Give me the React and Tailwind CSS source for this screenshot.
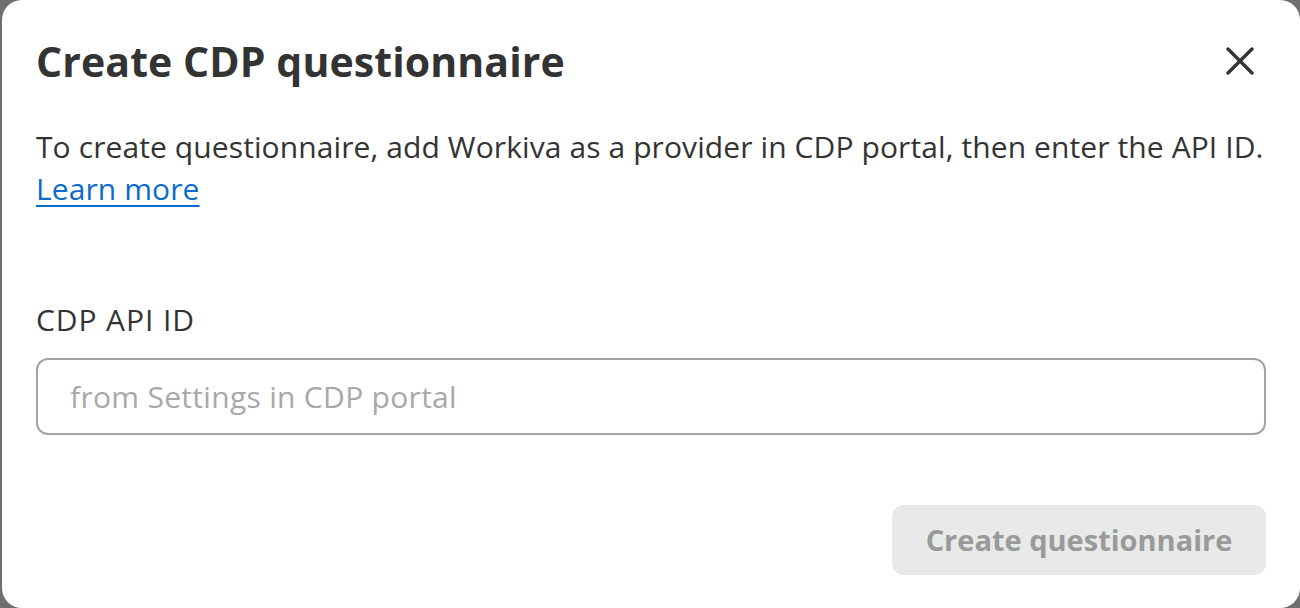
import React from "react";

export default function App() {
  return (
    <div className="w-full h-[608px] bg-[#6f6f6f] flex" style={{ fontFamily: '"Open Sans", "Noto Sans", sans-serif' }}>
      <div className="flex-1 ml-[2px] bg-white rounded-[20px] px-[34px] flex flex-col text-[#333333]">
        <div className="flex items-center justify-between mt-[37px] h-[48px]">
          <h1 className="text-[41px] leading-[48px] font-bold tracking-[0.1px]">Create CDP questionnaire</h1>
          <button className="mr-[12px] w-[28px] h-[28px] flex items-center justify-center text-[#333333]" aria-label="Close">
            <svg width="28" height="28" viewBox="0 0 28 28" fill="none" stroke="currentColor" strokeWidth="3.4" strokeLinecap="round">
              <path d="M2 2L26 26M26 2L2 26" />
            </svg>
          </button>
        </div>
        <p className="mt-[41px] text-[30px] leading-[42px] tracking-[0.1px]">
          To create questionnaire, add Workiva as a provider in CDP portal, then enter the API ID.
          <br />
          <a href="#" className="text-[#0b6bcb] underline underline-offset-[5px] decoration-[2px]">Learn more</a>
        </p>
        <label className="mt-[89px] text-[30px] leading-[42px] tracking-[0.9px]">CDP API ID</label>
        <input
          className="mt-[17px] h-[77px] w-full rounded-[12px] border-2 border-[#a3a3a3] px-[32px] text-[30px] tracking-[0.3px] outline-none placeholder:text-[#a8a8a8]"
          placeholder="from Settings in CDP portal"
        />
        <div className="flex justify-end mt-[70px]">
          <button className="h-[70px] w-[374px] rounded-[12px] bg-[#e8e9e9] text-[#9a9a9a] text-[29px] font-bold">
            Create questionnaire
          </button>
        </div>
      </div>
    </div>
  );
}
